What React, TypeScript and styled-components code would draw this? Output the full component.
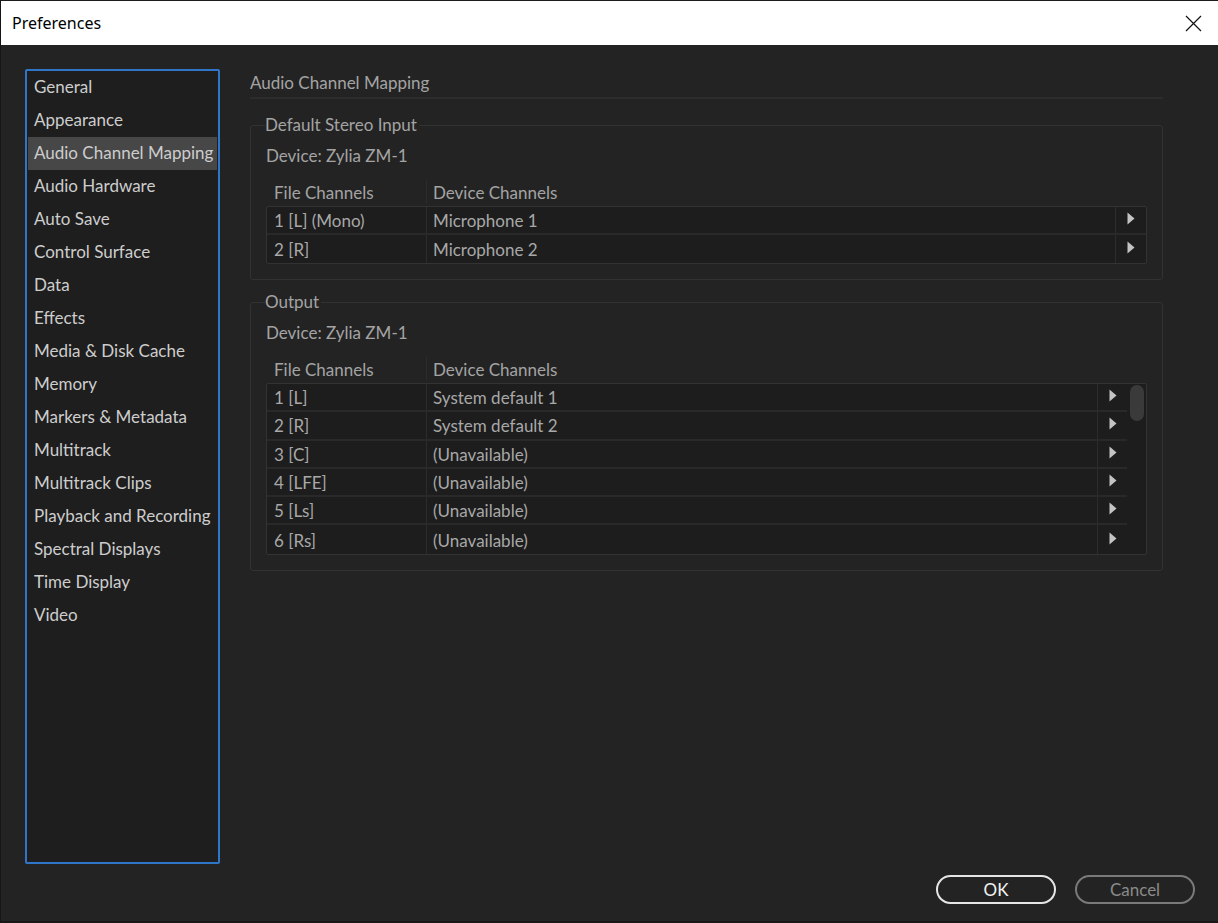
import React from "react";
import styled, { createGlobalStyle } from "styled-components";

const GlobalStyle = createGlobalStyle`
  html, body {
    margin: 0;
    padding: 0;
    background: #232323;
  }
  * {
    box-sizing: border-box;
  }
`;

const Window = styled.div`
  width: 1218px;
  height: 923px;
  display: flex;
  flex-direction: column;
  background: #232323;
  border-left: 1px solid #161616;
  border-bottom: 2px solid #181818;
  font-family: Lato, "Noto Sans", sans-serif;
  overflow: hidden;
`;

const TitleBar = styled.div`
  height: 45px;
  flex: none;
  background: #ffffff;
  border-top: 1px solid #1c1c1c;
  display: flex;
  align-items: center;
  justify-content: space-between;
  padding: 0 15px 0 11px;
  font-family: "Noto Sans", "Open Sans", sans-serif;
  font-size: 16px;
  color: #000;
`;

const CloseButton = styled.button`
  border: none;
  background: transparent;
  padding: 0;
  width: 20px;
  height: 20px;
  display: flex;
  align-items: center;
  justify-content: center;
  cursor: pointer;
`;

const Body = styled.div`
  flex: 1;
  display: flex;
  flex-direction: column;
  padding: 24px 0 0 24px;
`;

const Columns = styled.div`
  display: flex;
  gap: 30px;
  align-items: flex-start;
`;

const Sidebar = styled.div`
  width: 195px;
  height: 795px;
  flex: none;
  background: #1e1e1e;
  border: 2px solid #2f76c8;
  border-radius: 2px;
  padding: 0 1px;
  display: flex;
  flex-direction: column;
`;

const NavItem = styled.div<{ $active?: boolean }>`
  height: 33px;
  display: flex;
  align-items: center;
  padding: 0 0 2px 6px;
  font-size: 17px;
  color: #cdcdcd;
  background: ${(p) => (p.$active ? "#474747" : "transparent")};
  white-space: nowrap;
`;

const Main = styled.div`
  width: 913px;
  display: flex;
  flex-direction: column;
`;

const PageTitle = styled.div`
  height: 30px;
  display: flex;
  align-items: center;
  padding-bottom: 2px;
  font-size: 17px;
  color: #a3a3a3;
  border-bottom: 2px solid #2c2c2c;
`;

const Group = styled.fieldset<{ $top: number }>`
  margin: ${(p) => p.$top}px 0 0 0;
  padding: 0 15px 15px 15px;
  border: 1px solid #323232;
  border-radius: 3px;
  min-width: 0;
`;

const Legend = styled.legend`
  padding: 0 2px 0 0;
  margin-left: -1px;
  font-size: 17px;
  line-height: 22px;
  color: #a3a3a3;
`;

const DeviceLabel = styled.div`
  height: 24px;
  margin-top: 7px;
  display: flex;
  align-items: center;
  font-size: 17px;
  color: #a3a3a3;
`;

const TableHead = styled.div<{ $cols: string }>`
  display: grid;
  grid-template-columns: ${(p) => p.$cols};
  height: 24px;
  margin-top: 13px;
  margin-bottom: 2px;
`;

const HeadCell = styled.div<{ $sep?: boolean }>`
  display: flex;
  align-items: center;
  padding-left: ${(p) => (p.$sep ? 6 : 8)}px;
  font-size: 17px;
  color: #a3a3a3;
  border-left: ${(p) => (p.$sep ? "1px solid #2c2c2c" : "none")};
`;

const TableBox = styled.div`
  display: flex;
  background: #1d1d1d;
  border: 1px solid #333333;
  border-radius: 2px;
`;

const Rows = styled.div`
  flex: 1;
  display: flex;
  flex-direction: column;
`;

const Row = styled.div<{ $cols: string; $h: number; $last?: boolean }>`
  display: grid;
  grid-template-columns: ${(p) => p.$cols};
  height: ${(p) => p.$h}px;
  border-bottom: ${(p) => (p.$last ? "none" : "2px solid #292929")};
`;

const Cell = styled.div<{ $sep?: boolean }>`
  display: flex;
  align-items: center;
  padding-left: ${(p) => (p.$sep ? 6 : 7)}px;
  padding-top: 1px;
  font-size: 17px;
  color: #a8a8a8;
  border-left: ${(p) => (p.$sep ? "1px solid #2c2c2c" : "none")};
  white-space: nowrap;
`;

const ArrowCell = styled.div`
  display: flex;
  align-items: center;
  justify-content: center;
  border-left: 1px solid #2c2c2c;
  padding-bottom: 3px;
`;

const Scrollbar = styled.div`
  width: 19px;
  flex: none;
  padding: 1px 2px 0 3px;
`;

const Thumb = styled.div`
  height: 36px;
  border-radius: 7px;
  background: #3a3a3a;
`;

const Footer = styled.div`
  flex: 1;
  display: flex;
  justify-content: flex-end;
  align-items: flex-start;
  gap: 19px;
  padding: 11px 23px 0 0;
`;

const DialogButton = styled.button<{ $primary?: boolean }>`
  width: 120px;
  height: 29px;
  border-radius: 15px;
  background: transparent;
  border: 2px solid ${(p) => (p.$primary ? "#e6e6e6" : "#7a7a7a")};
  color: ${(p) => (p.$primary ? "#f2f2f2" : "#8a8a8a")};
  font-family: Lato, "Noto Sans", sans-serif;
  font-size: 17px;
  padding: 0;
  cursor: pointer;
`;

const Arrow = () => (
  <svg width="8" height="13" viewBox="0 0 8 13">
    <path d="M0.5 0.5 L7.5 6.5 L0.5 12.5 Z" fill="#c4c4c4" />
  </svg>
);

const navItems = [
  "General",
  "Appearance",
  "Audio Channel Mapping",
  "Audio Hardware",
  "Auto Save",
  "Control Surface",
  "Data",
  "Effects",
  "Media & Disk Cache",
  "Memory",
  "Markers & Metadata",
  "Multitrack",
  "Multitrack Clips",
  "Playback and Recording",
  "Spectral Displays",
  "Time Display",
  "Video",
];

const inputRows = [
  ["1 [L] (Mono)", "Microphone 1"],
  ["2 [R]", "Microphone 2"],
];

const outputRows = [
  ["1 [L]", "System default 1"],
  ["2 [R]", "System default 2"],
  ["3 [C]", "(Unavailable)"],
  ["4 [LFE]", "(Unavailable)"],
  ["5 [Ls]", "(Unavailable)"],
  ["6 [Rs]", "(Unavailable)"],
];

type MappingProps = {
  title: string;
  top: number;
  rows: string[][];
  scroll?: boolean;
};

const MappingGroup = ({ title, top, rows, scroll }: MappingProps) => {
  const rowCols = scroll ? "159px 1fr 30px" : "159px 1fr 31px";
  const rowH = scroll ? 28.3 : 28;
  const headCols = "160px 1fr";
  return (
    <Group $top={top}>
      <Legend>{title}</Legend>
      <DeviceLabel>Device: Zylia ZM-1</DeviceLabel>
      <TableHead $cols={headCols}>
        <HeadCell>File Channels</HeadCell>
        <HeadCell $sep>Device Channels</HeadCell>
      </TableHead>
      <TableBox>
        <Rows>
          {rows.map((r, i) => (
            <Row key={r[0]} $cols={rowCols} $h={rowH} $last={i === rows.length - 1}>
              <Cell>{r[0]}</Cell>
              <Cell $sep>{r[1]}</Cell>
              <ArrowCell>
                <Arrow />
              </ArrowCell>
            </Row>
          ))}
        </Rows>
        {scroll && (
          <Scrollbar>
            <Thumb />
          </Scrollbar>
        )}
      </TableBox>
    </Group>
  );
};

export default function App() {
  return (
    <>
      <GlobalStyle />
      <Window>
        <TitleBar>
          <span>Preferences</span>
          <CloseButton aria-label="Close">
            <svg width="17" height="17" viewBox="0 0 17 17">
              <path d="M1 1 L16 16 M16 1 L1 16" stroke="#111" strokeWidth="1.2" />
            </svg>
          </CloseButton>
        </TitleBar>
        <Body>
          <Columns>
            <Sidebar>
              {navItems.map((n) => (
                <NavItem key={n} $active={n === "Audio Channel Mapping"}>
                  {n}
                </NavItem>
              ))}
            </Sidebar>
            <Main>
              <PageTitle>Audio Channel Mapping</PageTitle>
              <MappingGroup title="Default Stereo Input" top={15} rows={inputRows} />
              <MappingGroup title="Output" top={11} rows={outputRows} scroll />
            </Main>
          </Columns>
          <Footer>
            <DialogButton $primary>OK</DialogButton>
            <DialogButton>Cancel</DialogButton>
          </Footer>
        </Body>
      </Window>
    </>
  );
}
